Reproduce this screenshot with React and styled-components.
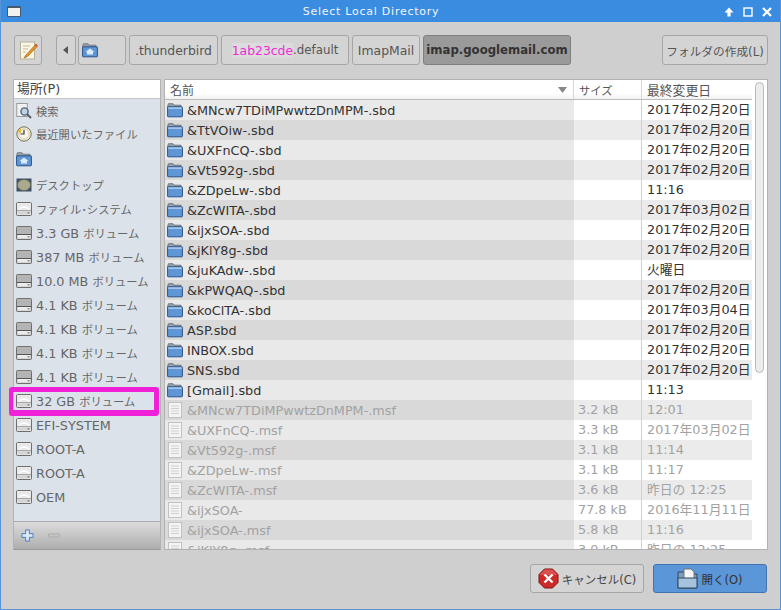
import { styled, createGlobalStyle } from 'styled-components';

const GlobalStyle = createGlobalStyle`
  html, body { margin: 0; padding: 0; background: #cfcfcf; }
  body { font-family: "DejaVu Sans", "Noto Sans CJK JP", sans-serif; font-size: 12.8px; color: #444; }
`;

const FolderIcon = () => (
  <svg width="16" height="16" viewBox="0 0 16 16">
    <path d="M0.7 4 L1.4 1.7 H6 L7 3.2 H14 V6 H0.7 Z" fill="#98a0a8" stroke="#5e6a76" strokeWidth="0.8" />
    <rect x="0.6" y="4.8" width="14.8" height="10" rx="0.6" fill="#5f96d6" stroke="#2a5289" strokeWidth="1" />
    <rect x="1.2" y="5.4" width="13.6" height="1.4" fill="#b6d2ef" />
  </svg>
);

const HomeFolderIcon = () => (
  <svg width="16" height="16" viewBox="0 0 16 16">
    <path d="M0.7 4 L1.4 1.7 H6 L7 3.2 H14 V6 H0.7 Z" fill="#9a9fa6" stroke="#6a7079" strokeWidth="0.8" />
    <rect x="0.6" y="4.8" width="14.8" height="10" rx="0.6" fill="#5f96d6" stroke="#2a5289" strokeWidth="1" />
    <path d="M8 6.6 L12.5 10 H11 V12.4 H5 V10 H3.5 Z" fill="#dcebf9" />
  </svg>
);

const FileIcon = () => (
  <svg width="16" height="16" viewBox="0 0 16 16">
    <rect x="1.5" y="0.5" width="13" height="15" fill="#f4f4f4" stroke="#c2c2c2" />
    <path d="M4 4 H12 M4 6.5 H12 M4 9 H12 M4 11.5 H12" stroke="#cfcfcf" strokeWidth="1" />
  </svg>
);

const DriveIcon = ({ dark }) => (
  <svg width="16" height="16" viewBox="0 0 16 16">
    <rect x="0.5" y="1.5" width="15" height="13" rx="1" fill={dark ? '#b4b4b4' : '#e8e8e8'} stroke="#6f6f6f" />
    <rect x="1.5" y="10" width="13" height="3.6" fill={dark ? '#ececec' : '#d6d6d6'} />
    <path d="M1 9.5 H15" stroke={dark ? '#555' : '#aaa'} />
    <path d="M3 8 Q8 4 13 8" fill="none" stroke="#fff" strokeWidth="1.4" opacity={dark ? 0 : 1} />
    <rect x="11.5" y="11.3" width="2" height="1" fill="#666" />
  </svg>
);

const SearchIcon = () => (
  <svg width="16" height="16" viewBox="0 0 16 16">
    <rect x="0.8" y="0.5" width="10.5" height="13" fill="#f2f2f2" stroke="#9a9a9a" />
    <circle cx="8.5" cy="8.5" r="3.6" fill="#bcd3ea" stroke="#54606c" strokeWidth="1.4" />
    <path d="M11 11 L15 15" stroke="#54606c" strokeWidth="2" />
  </svg>
);

const ClockIcon = () => (
  <svg width="16" height="16" viewBox="0 0 16 16">
    <circle cx="8" cy="8" r="7.2" fill="#efe9d2" stroke="#77725f" />
    <circle cx="8" cy="8" r="5" fill="#fbf9ef" stroke="#c9c1a0" strokeWidth="0.7" />
    <path d="M8 4 V8 H4.5" stroke="#333" strokeWidth="1.2" fill="none" />
    <path d="M1 6 L5 2 L5 7 Z" fill="#e8b92e" />
  </svg>
);

const DesktopIcon = () => (
  <svg width="16" height="16" viewBox="0 0 16 16">
    <rect x="0.5" y="1.5" width="15" height="13" fill="#3f5166" />
    <ellipse cx="8" cy="8" rx="6.6" ry="5.6" fill="#a9a98c" stroke="#5e5e48" strokeWidth="0.6" />
  </svg>
);

const EditIcon = () => (
  <svg width="19" height="19" viewBox="0 0 19 19">
    <rect x="1.5" y="1" width="14" height="17" fill="#fbf6e2" stroke="#b5b09a" />
    <path d="M4 5 H11 M4 8 H9 M4 11 H7" stroke="#b8b8a8" />
    <path d="M17 3 L7 14 L5 17 L8.5 15.5 L18.5 5 Z" fill="#e79a2b" stroke="#9c5c14" strokeWidth="0.7" />
    <path d="M17 3 L18.5 5 L17.5 6 L15.7 4.3 Z" fill="#d9534f" />
  </svg>
);

const CancelIcon = () => (
  <svg width="21" height="21" viewBox="0 0 21 21">
    <path d="M6.5 1 H14.5 L20 6.5 V14.5 L14.5 20 H6.5 L1 14.5 V6.5 Z" fill="#cf2a2a" stroke="#7c1414" />
    <path d="M1.5 7 L6.8 1.6 H14.2 L19.5 7 Z" fill="#e46a6a" opacity="0.6" />
    <path d="M6.5 6.5 L14.5 14.5 M14.5 6.5 L6.5 14.5" stroke="#fff" strokeWidth="2.4" />
  </svg>
);

const OpenIcon = () => (
  <svg width="21" height="21" viewBox="0 0 21 21">
    <path d="M1 4 H7 L8 6 H20 V20 H1 Z" fill="#7d9dbd" stroke="#33475c" />
    <path d="M7 1 H14 L17 4 V12 H7 Z" fill="#f6f6f6" stroke="#777" />
    <path d="M1 10 H20 V20 H1 Z" fill="#a6c3de" stroke="#33475c" />
  </svg>
);

// the Japanese runs are set a bit smaller than the latin ones in this theme
const mixed = (text) =>
  text.split(/([\u3000-\u9fff\uff00-\uffef]+)/).map((part, i) =>
    i % 2 === 1 ? <Jp key={i}>{part}</Jp> : part
  );

const places = [
  { icon: <SearchIcon />, label: '検索', height: 23 },
  { icon: <ClockIcon />, label: '最近開いたファイル' },
  { icon: <HomeFolderIcon />, label: '', height: 26 },
  { icon: <DesktopIcon />, label: 'デスクトップ', height: 25 },
  { icon: <DriveIcon />, label: 'ファイル･システム' },
  { icon: <DriveIcon dark />, label: '3.3 GB ボリューム' },
  { icon: <DriveIcon dark />, label: '387 MB ボリューム' },
  { icon: <DriveIcon dark />, label: '10.0 MB ボリューム' },
  { icon: <DriveIcon dark />, label: '4.1 KB ボリューム' },
  { icon: <DriveIcon dark />, label: '4.1 KB ボリューム' },
  { icon: <DriveIcon dark />, label: '4.1 KB ボリューム' },
  { icon: <DriveIcon dark />, label: '4.1 KB ボリューム' },
  { icon: <DriveIcon />, label: '32 GB ボリューム', marked: true },
  { icon: <DriveIcon />, label: 'EFI-SYSTEM' },
  { icon: <DriveIcon />, label: 'ROOT-A' },
  { icon: <DriveIcon />, label: 'ROOT-A' },
  { icon: <DriveIcon />, label: 'OEM' },
];

const feb20 = '2017年02月20日';
const files = [
  ['&MNcw7TDiMPwwtzDnMPM-.sbd', '', feb20],
  ['&TtVOiw-.sbd', '', feb20],
  ['&UXFnCQ-.sbd', '', feb20],
  ['&Vt592g-.sbd', '', feb20],
  ['&ZDpeLw-.sbd', '', '11:16'],
  ['&ZcWITA-.sbd', '', '2017年03月02日'],
  ['&ijxSOA-.sbd', '', feb20],
  ['&jKlY8g-.sbd', '', feb20],
  ['&juKAdw-.sbd', '', '火曜日'],
  ['&kPWQAQ-.sbd', '', feb20],
  ['&koClTA-.sbd', '', '2017年03月04日'],
  ['ASP.sbd', '', feb20],
  ['INBOX.sbd', '', feb20],
  ['SNS.sbd', '', feb20],
  ['[Gmail].sbd', '', '11:13'],
  ['&MNcw7TDiMPwwtzDnMPM-.msf', '3.2 kB', '12:01'],
  ['&UXFnCQ-.msf', '3.3 kB', '2017年03月02日'],
  ['&Vt592g-.msf', '3.1 kB', '11:14'],
  ['&ZDpeLw-.msf', '3.1 kB', '11:17'],
  ['&ZcWITA-.msf', '3.6 kB', '昨日の 12:25'],
  ['&ijxSOA-', '77.8 kB', '2016年11月11日'],
  ['&ijxSOA-.msf', '5.8 kB', '11:16'],
  ['&jKlY8g-.msf', '3.0 kB', '昨日の 12:25'],
];

const App = () => {
  return (
    <Window>
      <GlobalStyle />
      <TitleBar>
        <WindowGlyph />
        <Title>Select Local Directory</Title>
        <TitleButtons>
          <svg width="12" height="12" viewBox="0 0 12 12">
            <path d="M6 1.5 L10.5 6.5 H7.6 V10.5 H4.4 V6.5 H1.5 Z" fill="#fff" />
          </svg>
          <svg width="12" height="12" viewBox="0 0 12 12">
            <rect x="2" y="2" width="8" height="8" fill="none" stroke="#fff" strokeWidth="1.4" />
          </svg>
          <svg width="12" height="12" viewBox="0 0 12 12">
            <path d="M2 2 L10 10 M10 2 L2 10" stroke="#fff" strokeWidth="2.2" />
          </svg>
        </TitleButtons>
      </TitleBar>

      <Toolbar>
        <IconButton><EditIcon /></IconButton>
        <Path>
          <BackButton>
            <svg width="6" height="8" viewBox="0 0 6 8"><path d="M5 0 V8 L0 4 Z" fill="#555" /></svg>
          </BackButton>
          <Crumb $width={48} $start><HomeFolderIcon /></Crumb>
          <Crumb $width={89}>.thunderbird</Crumb>
          <Crumb $width={128} $size={11.8}><Magenta>1ab23cde</Magenta>.default</Crumb>
          <Crumb $width={68}>ImapMail</Crumb>
          <Crumb $width={148} $size={11.7} $active>imap.googlemail.com</Crumb>
        </Path>
        <CreateButton>フォルダの作成(L)</CreateButton>
      </Toolbar>

      <Panes>
        <Sidebar>
          <SideHeader>場所(P)</SideHeader>
          <PlaceList>
            {places.map((place, i) => (
              <Place key={i} $height={place.height}>
                {place.icon}
                <span>{mixed(place.label)}</span>
                {place.marked && <Marker />}
              </Place>
            ))}
          </PlaceList>
          <SideFoot>
            <svg width="13" height="13" viewBox="0 0 14 14">
              <path d="M5 1 H9 V5 H13 V9 H9 V13 H5 V9 H1 V5 H5 Z" fill="#dbe8f6" stroke="#3d78c0" />
            </svg>
            <svg width="12" height="6" viewBox="0 0 12 6">
              <rect x="0.5" y="1" width="11" height="3" rx="0.5" fill="#c4c4c4" stroke="#ababab" />
            </svg>
          </SideFoot>
        </Sidebar>

        <FileView>
          <Table>
            <HeaderRow>
              <NameHead>
                名前
                <svg width="9" height="6" viewBox="0 0 9 6"><path d="M0 0 H9 L4.5 6 Z" fill="#888" /></svg>
              </NameHead>
              <SizeHead>サイズ</SizeHead>
              <DateHead>最終変更日</DateHead>
            </HeaderRow>
            <Rows>
              {files.map(([name, size, date], i) => {
                const isFile = size !== '';
                return (
                  <Row key={i} $dim={isFile}>
                    <NameCell $even={i % 2 === 1}>
                      {isFile ? <FileIcon /> : <FolderIcon />}
                      <span>{name}</span>
                    </NameCell>
                    <SizeCell $even={i % 2 === 1}>{size}</SizeCell>
                    <DateCell $even={i % 2 === 1}>{date}</DateCell>
                  </Row>
                );
              })}
            </Rows>
          </Table>
          <ScrollTrack>
            <ScrollThumb />
          </ScrollTrack>
        </FileView>
      </Panes>

      <Actions>
        <ActionButton><CancelIcon />キャンセル(C)</ActionButton>
        <ActionButton $primary><OpenIcon />開く(O)</ActionButton>
      </Actions>
    </Window>
  );
};
export default App;

const Jp = styled.span`
  font-size: 11.3px;
`;

const Window = styled.div`
  width: 781px;
  height: 610px;
  box-sizing: border-box;
  display: flex;
  flex-direction: column;
  overflow: hidden;
  background: #cfcfcf;
  border-left: 1px solid #5b94d6;
  border-right: 1px solid #5b94d6;
  border-bottom: 1px solid #5b94d6;
`;

const TitleBar = styled.div`
  position: relative;
  height: 22px;
  flex: none;
  margin: 0 -1px;
  padding-right: 39px;
  display: flex;
  align-items: center;
  justify-content: center;
  background: #3a8ce0;
`;

const WindowGlyph = styled.div`
  position: absolute;
  left: 7px;
  top: 6px;
  width: 14px;
  height: 11px;
  box-sizing: border-box;
  border: 1px solid #48596b;
  border-top-width: 2px;
  background: #f1f1f1;
  border-radius: 1px;
`;

const Title = styled.div`
  color: #f2f6fb;
  font-size: 11px;
  letter-spacing: 0.75px;
`;

const TitleButtons = styled.div`
  position: absolute;
  right: 8px;
  top: 6px;
  display: flex;
  gap: 7px;
`;

const Toolbar = styled.div`
  height: 30px;
  flex: none;
  margin-top: 13px;
  padding: 0 12px 0 13px;
  display: flex;
  align-items: stretch;
  justify-content: space-between;
`;

const Path = styled.div`
  display: flex;
  gap: 3px;
  margin-left: 14px;
  margin-right: auto;
`;

const buttonBase = `
  box-sizing: border-box;
  display: flex;
  align-items: center;
  justify-content: center;
  border: 1px solid #a6a6a6;
  border-radius: 3px;
  background: #d4d4d4;
  color: #555;
  font-family: inherit;
  font-size: 12.4px;
`;

const IconButton = styled.div`
  ${buttonBase}
  width: 28px;
`;

const BackButton = styled.div`
  ${buttonBase}
  width: 20px;
  margin-right: -1px;
`;

const Crumb = styled.div`
  ${buttonBase}
  width: ${(p) => p.$width}px;
  justify-content: ${(p) => (p.$start ? 'flex-start' : 'center')};
  padding-left: ${(p) => (p.$start ? '3px' : '0')};
  background: ${(p) => (p.$active ? '#9a9a9a' : '#d4d4d4')};
  border-color: ${(p) => (p.$active ? '#808080' : '#a6a6a6')};
  color: ${(p) => (p.$active ? '#333' : '#555')};
  font-size: ${(p) => p.$size || 12.4}px;
  font-weight: ${(p) => (p.$active ? 700 : 400)};
  white-space: nowrap;
`;

const Magenta = styled.span`
  color: #ee2bd6;
  font-size: 12.4px;
  background: #dcdcdc;
`;

const CreateButton = styled.div`
  ${buttonBase}
  width: 106px;
  font-size: 11.7px;
  white-space: nowrap;
`;

const Panes = styled.div`
  display: flex;
  gap: 3px;
  margin: 14px 12px 0 12px;
  height: 471px;
  flex: none;
`;

const Sidebar = styled.div`
  width: 148px;
  flex: none;
  display: flex;
  flex-direction: column;
  box-sizing: border-box;
  border: 1px solid #b2b2b2;
  border-bottom-color: #9a9a9a;
`;

const SideHeader = styled.div`
  height: 18px;
  flex: none;
  line-height: 18px;
  padding-left: 3px;
  background: #fff;
  color: #444;
`;

const PlaceList = styled.div`
  flex: 1;
  background: #dbe2ea;
  border-top: 1px solid #c4c4c4;
  border-bottom: 1px solid #aaa;
`;

const Place = styled.div`
  position: relative;
  height: ${(p) => p.$height || 24}px;
  display: flex;
  align-items: center;
  gap: 4px;
  padding-left: 2px;
  color: #666;
  white-space: nowrap;
`;

const Marker = styled.div`
  position: absolute;
  left: -5px;
  top: -2px;
  width: 150px;
  height: 29px;
  box-sizing: border-box;
  border-style: solid;
  border-color: #f01fd8;
  border-width: 5px 5px 6px 4px;
  border-radius: 3px;
`;

const SideFoot = styled.div`
  height: 27px;
  flex: none;
  display: flex;
  align-items: center;
  gap: 14px;
  padding-left: 7px;
  background: linear-gradient(#dcdcdc, #aeaeae);
`;

const FileView = styled.div`
  flex: 1;
  display: flex;
  box-sizing: border-box;
  border: 1px solid #b2b2b2;
  background: #fff;
  min-width: 0;
`;

const Table = styled.div`
  width: 587px;
  flex: none;
  display: flex;
  flex-direction: column;
  overflow: hidden;
`;

const HeaderRow = styled.div`
  height: 20px;
  flex: none;
  box-sizing: border-box;
  display: flex;
  background: linear-gradient(#fff 70%, #f2f2f2);
  border-bottom: 1px solid #bcbcbc;
  color: #555;
`;

const NameHead = styled.div`
  width: 409px;
  box-sizing: border-box;
  padding: 0 6px 0 5px;
  display: flex;
  align-items: center;
  justify-content: space-between;
  border-right: 1px solid #d8d8d8;
  font-size: 12px;
`;

const SizeHead = styled.div`
  width: 68px;
  box-sizing: border-box;
  padding-left: 5px;
  display: flex;
  align-items: center;
  border-right: 1px solid #d8d8d8;
  font-size: 11.3px;
`;

const DateHead = styled.div`
  flex: 1;
  padding-left: 5px;
  display: flex;
  align-items: center;
`;

const Rows = styled.div`
  flex: 1;
  overflow: hidden;
`;

const Row = styled.div`
  height: 20px;
  display: flex;
  color: ${(p) => (p.$dim ? '#a2a2a2' : '#333')};
`;

const NameCell = styled.div`
  width: 409px;
  box-sizing: border-box;
  padding-left: 2px;
  display: flex;
  align-items: center;
  gap: 4px;
  background: ${(p) => (p.$even ? '#d9d9d9' : '#e9e9e9')};
`;

const SizeCell = styled.div`
  width: 68px;
  box-sizing: border-box;
  padding-left: 4px;
  line-height: 20px;
  border-right: 1px solid #d0d0d0;
  background: ${(p) => (p.$even ? '#ebebeb' : '#fff')};
`;

const DateCell = styled.div`
  flex: 1;
  padding-left: 5px;
  line-height: 20px;
  white-space: nowrap;
  background: ${(p) => (p.$even ? '#ebebeb' : '#fff')};
`;

const ScrollTrack = styled.div`
  flex: 1;
  padding: 2px 3px;
  background: #fff;
`;

const ScrollThumb = styled.div`
  height: 291px;
  box-sizing: border-box;
  border: 1px solid #b9b9b9;
  border-radius: 5px;
  background: #ececec;
`;

const Actions = styled.div`
  display: flex;
  justify-content: flex-end;
  gap: 9px;
  margin: 14px 13px 0 0;
`;

const ActionButton = styled.div`
  ${buttonBase}
  width: 114px;
  height: 29px;
  gap: 3px;
  font-size: 11.5px;
  background: ${(p) => (p.$primary ? '#5b96d8' : '#d4d4d4')};
  border-color: ${(p) => (p.$primary ? '#3f74b0' : '#a6a6a6')};
  color: ${(p) => (p.$primary ? '#333' : '#444')};
`;
